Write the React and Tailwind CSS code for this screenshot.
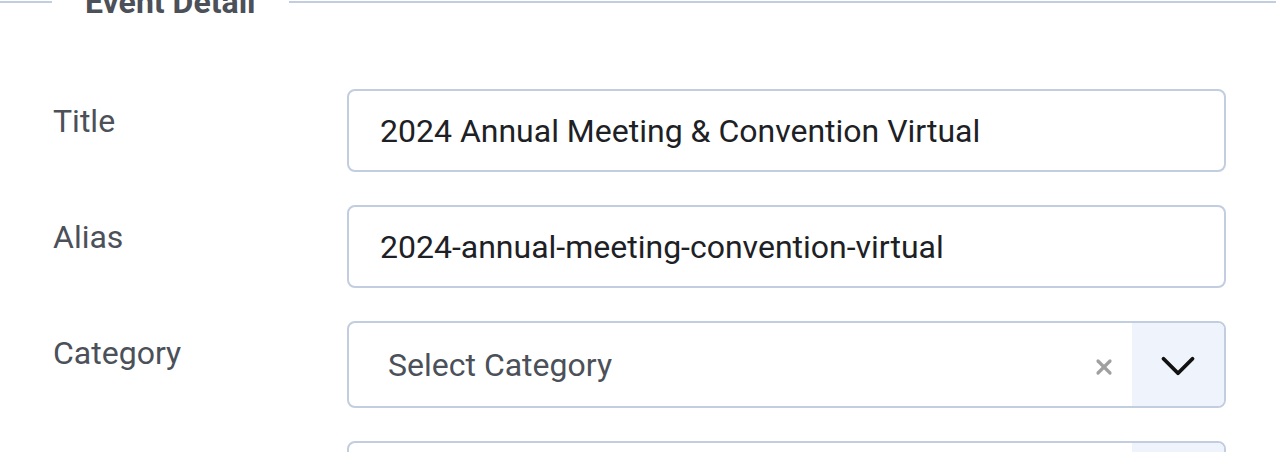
import { ChevronDown, X } from 'lucide-react';

function Row({ label, children }) {
  return (
    <div className="flex items-start">
      <label className="w-[294px] shrink-0 pt-[12px] text-[32px] leading-[40px] text-[#4b5059]">{label}</label>
      <div className="w-[879px]">{children}</div>
    </div>
  );
}

function TextInput({ value }) {
  return (
    <div className="flex h-[83px] items-center rounded-[8px] border-2 border-[#c2cde0] bg-white px-[31px] text-[32px] text-[#1d2125]">
      {value}
    </div>
  );
}

function SelectBox({ placeholder }) {
  return (
    <div className="flex h-[87px] items-stretch overflow-hidden rounded-[8px] border-2 border-[#c2cde0] bg-white">
      <div className="flex flex-1 items-center pl-[39px] text-[32px] text-[#4b5059]">{placeholder}</div>
      <div className="flex w-[56px] items-center justify-center pt-[4px] text-[#a0a0a0]">
        <X size={24} strokeWidth={3.2} />
      </div>
      <div className="flex w-[92px] items-center justify-center pt-[2px] bg-[#eff3fb] text-[#111]">
        <ChevronDown size={58} strokeWidth={1.6} />
      </div>
    </div>
  );
}

export default function App() {
  return (
    <div className="h-[452px] w-[1276px] overflow-hidden bg-white font-['Roboto',sans-serif]">
      <fieldset className="-mt-[16px] ml-0 border-t-2 border-[#c2cde0] pl-[53px] pr-[51px]">
        <legend className="ml-[-1px] px-[33px] text-[32px] font-bold leading-[36px] text-[#4b5059]">Event Detail</legend>
        <div className="mt-[69px] flex flex-col gap-[33px]">
          <Row label="Title">
            <TextInput value="2024 Annual Meeting & Convention Virtual" />
          </Row>
          <Row label="Alias">
            <TextInput value="2024-annual-meeting-convention-virtual" />
          </Row>
          <Row label="Category">
            <SelectBox placeholder="Select Category" />
          </Row>
          <Row label="">
            <SelectBox placeholder="" />
          </Row>
        </div>
      </fieldset>
    </div>
  );
}
